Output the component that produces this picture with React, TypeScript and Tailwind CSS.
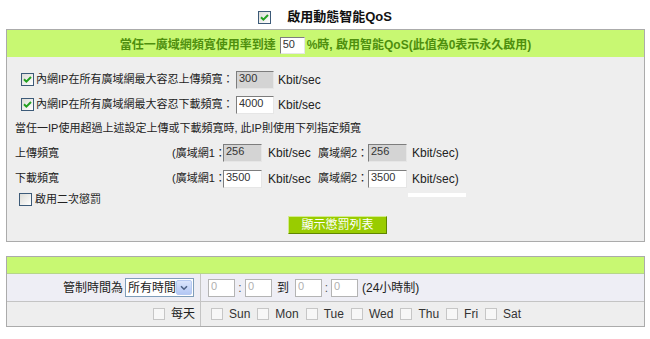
import React from 'react';

const FONT = "font-['Liberation_Sans','Noto_Sans_CJK_TC',sans-serif]";

function Check({ checked = false, disabled = false }: { checked?: boolean; disabled?: boolean }) {
  if (disabled) {
    return <span className="block h-[12px] w-[12px] shrink-0 border border-[#c6c6c6] bg-[#f7f7f7]" />;
  }
  return (
    <span className="flex h-[13px] w-[13px] shrink-0 items-center justify-center border border-[#3c5a78] bg-gradient-to-br from-[#dcdcd7] to-white">
      {checked && (
        <svg width="9" height="9" viewBox="0 0 9 9">
          <path d="M1 4.2 L3.4 6.6 L8 2" fill="none" stroke="#22a020" strokeWidth="2" />
        </svg>
      )}
    </span>
  );
}

function GrayBox({ value, className }: { value: string; className: string }) {
  return (
    <input
      readOnly
      value={value}
      className={`h-[18px] shrink-0 border border-t-[#7d7d7d] border-l-[#7d7d7d] border-b-[#e6e6e6] border-r-[#e6e6e6] px-[2px] pb-[4px] text-[11px] leading-none text-[#333] outline-none ${className}`}
    />
  );
}

function TimeBox() {
  return (
    <input
      readOnly
      value="0"
      className="h-[18px] w-[27px] shrink-0 border border-[#b4b4b4] bg-white px-[2px] pb-[4px] text-[11px] leading-none text-[#b0b0b0] outline-none"
    />
  );
}

const days = ['Sun', 'Mon', 'Tue', 'Wed', 'Thu', 'Fri', 'Sat'];

function RateRow({ label, value, gray }: { label: string; value: string; gray: boolean }) {
  const bg = gray ? 'w-[39px] bg-[#d4d4d4]' : 'w-[39px] bg-white';
  return (
    <>
      <span className="w-[157px] shrink-0">{label}</span>
      <span className="w-[51px] shrink-0 whitespace-nowrap">(廣域網1：</span>
      <GrayBox value={value} className={bg} />
      <span className="ml-[6px] w-[50px] shrink-0 whitespace-nowrap text-[12px]">Kbit/sec</span>
      <span className="w-[50px] shrink-0 whitespace-nowrap">廣域網2：</span>
      <GrayBox value={value} className={bg} />
      <span className="ml-[5px] whitespace-nowrap text-[12px]">Kbit/sec)</span>
    </>
  );
}

export default function App() {
  return (
    <div className={`h-[339px] w-[650px] overflow-hidden bg-white text-[#222] ${FONT}`}>
      {/* title */}
      <div className="flex h-[29px] items-center justify-center gap-[16px] pt-[5px]">
        <Check checked />
        <span className="text-[13px] font-bold text-[#111]">啟用動態智能QoS</span>
      </div>

      {/* panel 1 */}
      <div className="ml-[6px] w-[639px] border border-[#ababab]">
        <div className="flex h-[27px] items-center justify-center bg-[#c8f872] pt-[3px] text-[12px] font-bold text-[#4e8f0e]">
          <span>當任一廣域網頻寬使用率到達</span>
          <input
            readOnly
            value="50"
            className="ml-[4px] mr-[2px] h-[17px] w-[25px] border border-t-[#7d7d7d] border-l-[#7d7d7d] border-b-[#e6e6e6] border-r-[#e6e6e6] bg-white px-[2px] pb-[3px] text-[11px] font-normal leading-none text-[#333] outline-none"
          />
          <span>%時, 啟用智能QoS(此值為0表示永久啟用)</span>
        </div>

        <div className="bg-[#eeeeee] pb-[7px] pl-[8px] pt-[10px] text-[11px]">
          <div className="flex h-[25px] items-center pl-[6px]">
            <Check checked />
            <span className="ml-[2px] w-[200px] shrink-0 whitespace-nowrap">內網IP在所有廣域網最大容忍上傳頻寬：</span>
            <GrayBox value="300" className="w-[38px] bg-[#d4d4d4]" />
            <span className="ml-[4px] text-[12px]">Kbit/sec</span>
          </div>
          <div className="flex h-[25px] items-center pl-[6px]">
            <Check checked />
            <span className="ml-[2px] w-[200px] shrink-0 whitespace-nowrap">內網IP在所有廣域網最大容忍下載頻寬：</span>
            <GrayBox value="4000" className="w-[38px] bg-white" />
            <span className="ml-[4px] text-[12px]">Kbit/sec</span>
          </div>
          <div className="flex h-[23px] items-center">
            當任一IP使用超過上述設定上傳或下載頻寬時, 此IP則使用下列指定頻寬
          </div>
          <div className="flex h-[26px] items-center">
            <RateRow label="上傳頻寬" value="256" gray />
          </div>
          <div className="flex h-[25px] items-center">
            <RateRow label="下載頻寬" value="3500" gray={false} />
          </div>
          <div className="relative flex h-[16px] items-center pl-[4px]">
            <Check />
            <span className="ml-[3px]">啟用二次懲罰</span>
            <div className="absolute left-[393px] top-[2px] h-[4px] w-[58px] bg-white" />
          </div>
          <button className="ml-[273px] mt-[9px] flex h-[18px] w-[99px] items-center justify-center border border-t-[#d2ec8a] border-l-[#d2ec8a] border-b-[#5f8500] border-r-[#5f8500] bg-[#99cc00] text-[12px] text-white">
            顯示懲罰列表
          </button>
        </div>
      </div>

      {/* panel 2 */}
      <div className="ml-[6px] mt-[14px] w-[639px] border border-[#ababab] text-[12px]">
        <div className="h-[17px] border-b border-[#b6d68a] bg-[#c8f872]" />
        <div className="flex h-[28px] border-b border-[#c4c4c4] bg-[#eeeef5]">
          <div className="flex w-[194px] items-center justify-end border-r border-[#c4c4c4] pr-[6px]">
            <span className="mr-[2px]">管制時間為</span>
            <div className="flex h-[19px] w-[69px] items-center border border-[#7f9db9] bg-white pl-[2px]">
              <span className="flex-1">所有時間</span>
              <span className="mr-[1px] flex h-[15px] w-[16px] items-center justify-center rounded-[2px] border border-[#b6c9f2] bg-gradient-to-b from-[#dbe5fc] to-[#b3c7f4]">
                <svg width="8" height="6" viewBox="0 0 8 6">
                  <path d="M1 1.2 L4 4.2 L7 1.2" fill="none" stroke="#4d6185" strokeWidth="1.6" />
                </svg>
              </span>
            </div>
          </div>
          <div className="flex flex-1 items-center pl-[7px]">
            <TimeBox />
            <span className="w-[10px] text-center text-[#555]">:</span>
            <TimeBox />
            <span className="ml-[5px] mr-[6px]">到</span>
            <TimeBox />
            <span className="w-[9px] text-center text-[#555]">:</span>
            <TimeBox />
            <span className="ml-[4px]">(24小時制)</span>
          </div>
        </div>
        <div className="flex h-[24px] bg-[#eeeeee]">
          <div className="flex w-[194px] items-center justify-end border-r border-[#c4c4c4] pr-[5px]">
            <Check disabled />
            <span className="ml-[6px]">每天</span>
          </div>
          <div className="flex flex-1 items-center pl-[10px]">
            {days.map((d) => (
              <span key={d} className="mr-[7px] flex items-center">
                <Check disabled />
                <span className="ml-[6px] text-[#333]">{d}</span>
              </span>
            ))}
          </div>
        </div>
      </div>
    </div>
  );
}
